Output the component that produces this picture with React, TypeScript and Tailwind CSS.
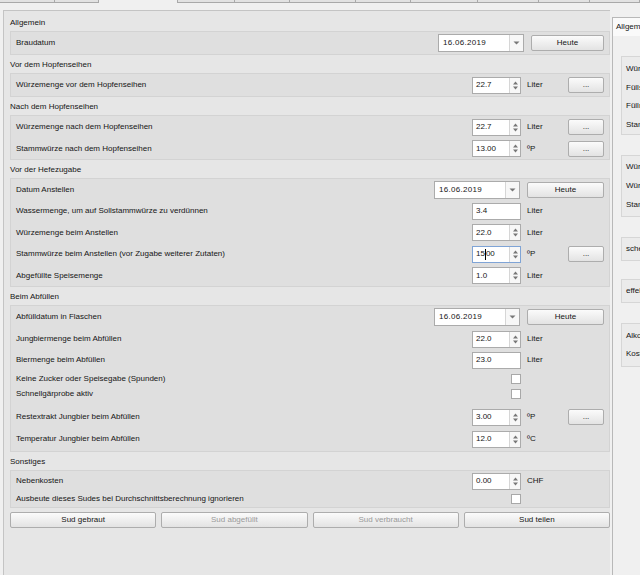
import React from 'react';

// Brau-Formular (Qt-Stil), kleine Schrift wie Tahoma 8pt verkleinert

const font = { fontFamily: '"Liberation Sans", Arial, sans-serif' };

function SpinArrows() {
  return (
    <div className="w-[11px] h-full border-l border-[#d6d6d6] flex items-center justify-center bg-[#f7f7f7]">
      <svg width="7" height="11" viewBox="0 0 7 11">
        <path d="M1 4.5 L3.5 1.5 L6 4.5 Z" fill="#777" />
        <path d="M1 6.5 L3.5 9.5 L6 6.5 Z" fill="#777" />
      </svg>
    </div>
  );
}

function Spin({ value, arrows = true, focused = false }: { value: string; arrows?: boolean; focused?: boolean }) {
  return (
    <div
      className={
        focused
          ? 'w-[49px] h-[17px] bg-white border border-[#7fa4d6] flex items-center'
          : 'w-[49px] h-[17px] bg-white border border-[#ababab] flex items-center'
      }
    >
      <div className="flex-1 pl-[3px] flex items-center text-[#151515]">
        {focused ? (
          <>
            <span>15</span>
            <span className="w-px h-[11px] bg-black" />
            <span>00</span>
          </>
        ) : (
          value
        )}
      </div>
      {arrows && <SpinArrows />}
    </div>
  );
}

function DateEdit({ value }: { value: string }) {
  return (
    <div className="w-[86px] h-[18px] bg-white border border-[#ababab] flex items-center">
      <div className="flex-1 pl-[4px] tracking-[0.3px] text-[#151515]">{value}</div>
      <div className="w-[14px] h-full border-l border-[#d6d6d6] flex items-center justify-center bg-[#f7f7f7]">
        <svg width="7" height="4" viewBox="0 0 7 4">
          <path d="M0.5 0.5 L3.5 3.5 L6.5 0.5 Z" fill="#777" />
        </svg>
      </div>
    </div>
  );
}

function Btn({ label, className = '', disabled = false }: { label: string; className?: string; disabled?: boolean }) {
  return (
    <div
      className={
        'h-[16px] flex items-center justify-center rounded-[2px] border border-[#adadad] bg-gradient-to-b from-[#fbfbfb] to-[#e3e3e3] ' +
        (disabled ? 'text-[#9a9a9a] ' : 'text-[#151515] ') +
        className
      }
    >
      {label}
    </div>
  );
}

function Check() {
  return <div className="w-[10px] h-[10px] bg-white border border-[#a8a8a8]" />;
}

interface RowProps {
  label: string;
  h: string;
  value?: string;
  arrows?: boolean;
  focused?: boolean;
  unit?: string;
  dots?: boolean;
  check?: boolean;
}

function Row({ label, h, value, arrows = true, focused, unit, dots, check }: RowProps) {
  return (
    <div className={'flex items-center pl-[5px] pr-[5px] ' + h}>
      <div className="flex-1 text-[#151515] whitespace-nowrap">{label}</div>
      <div className="w-[49px] flex justify-end">
        {check ? <Check /> : value !== undefined && <Spin value={value} arrows={arrows} focused={focused} />}
      </div>
      <div className="w-[47px] pl-[6px] text-[#151515]">{unit}</div>
      <div className="w-[36px]">{dots && <Btn label="..." className="w-[36px]" />}</div>
    </div>
  );
}

function DateRow({ label, h, narrow }: { label: string; h: string; narrow?: boolean }) {
  return (
    <div className={'flex items-center pl-[5px] pr-[5px] ' + h}>
      <div className="flex-1 text-[#151515]">{label}</div>
      <DateEdit value="16.06.2019" />
      {narrow ? <Btn label="Heute" className="ml-[7px] w-[73px]" /> : <Btn label="Heute" className="ml-[7px] w-[77px]" />}
    </div>
  );
}

function GroupLabel({ title }: { title: string }) {
  return <div className="h-[18px] pt-[2px] flex items-center text-[#151515]">{title}</div>;
}

function Box({ children, className = '' }: { children: React.ReactNode; className?: string }) {
  return <div className={'w-[600px] border border-[#d3d3d3] bg-[#dfdfdf] ' + className}>{children}</div>;
}

function RightBox({ rows, className, rowH }: { rows: string[]; className: string; rowH: string }) {
  return (
    <div className={'border border-r-0 border-[#d6d6d6] bg-[#ebebeb] ' + className}>
      {rows.map((r, i) => (
        <div key={i} className={'pl-[4px] flex items-center whitespace-nowrap text-[#151515] ' + rowH}>
          {r}
        </div>
      ))}
    </div>
  );
}

const tabs = [
  { w: 'w-[55px]', sel: false },
  { w: 'w-[44px]', sel: false },
  { w: 'w-[79px]', sel: true },
  { w: 'w-[57px]', sel: false },
  { w: 'w-[55px]', sel: false },
  { w: 'w-[66px]', sel: false },
  { w: 'w-[55px]', sel: false },
  { w: 'w-[67px]', sel: false },
  { w: 'w-[61px]', sel: false },
  { w: 'w-[51px]', sel: false },
  { w: 'w-[50px]', sel: false },
];

export default function App() {
  return (
    <div className="w-[640px] h-[575px] overflow-hidden bg-[#f0f0f0] flex flex-col text-[8px] leading-none" style={font}>
      {/* Reiterleiste oben */}
      <div className="h-[3px] flex shrink-0">
        {tabs.map((t, i) =>
          t.sel ? (
            <div key={i} className={t.w + ' h-full bg-[#f0f0f0] border-r border-[#a9a9a9]'} />
          ) : (
            <div key={i} className={t.w + ' h-full bg-[#e2e2e2] border-r border-b border-[#a9a9a9]'} />
          )
        )}
      </div>

      <div className="flex-1 flex">
        {/* Hauptbereich */}
        <div className="w-[612px] pl-[3px] pt-[7px] flex">
          <div className="flex-1 border-l border-t border-[#c4c4c4] bg-[#e6e6e6] pl-[6px] pt-[2px]">
            <GroupLabel title="Allgemein" />
            <Box>
              <DateRow label="Braudatum" h="h-[22px]" narrow />
            </Box>

            <GroupLabel title="Vor dem Hopfenseihen" />
            <Box>
              <Row label="Würzemenge vor dem Hopfenseihen" h="h-[22px]" value="22.7" unit="Liter" dots />
            </Box>

            <GroupLabel title="Nach dem Hopfenseihen" />
            <Box>
              <Row label="Würzemenge nach dem Hopfenseihen" h="h-[22px]" value="22.7" unit="Liter" dots />
              <Row label="Stammwürze nach dem Hopfenseihen" h="h-[21px]" value="13.00" unit="ºP" dots />
            </Box>

            <GroupLabel title="Vor der Hefezugabe" />
            <Box>
              <DateRow label="Datum Anstellen" h="h-[21px]" />
              <Row label="Wassermenge, um auf Sollstammwürze zu verdünnen" h="h-[22px]" value="3.4" arrows={false} unit="Liter" />
              <Row label="Würzemenge beim Anstellen" h="h-[21px]" value="22.0" unit="Liter" />
              <Row label="Stammwürze beim Anstellen (vor Zugabe weiterer Zutaten)" h="h-[22px]" value="15.00" focused unit="ºP" dots />
              <Row label="Abgefüllte Speisemenge" h="h-[21px]" value="1.0" unit="Liter" />
            </Box>

            <GroupLabel title="Beim Abfüllen" />
            <Box className="pb-[1px]">
              <DateRow label="Abfülldatum in Flaschen" h="h-[22px]" />
              <Row label="Jungbiermenge beim Abfüllen" h="h-[22px]" value="22.0" unit="Liter" />
              <Row label="Biermenge beim Abfüllen" h="h-[20px]" value="23.0" arrows={false} unit="Liter" />
              <Row label="Keine Zucker oder Speisegabe (Spunden)" h="h-[18px]" check />
              <Row label="Schnellgärprobe aktiv" h="h-[12px]" check />
              <div className="h-[6px]" />
              <Row label="Restextrakt Jungbier beim Abfüllen" h="h-[22px]" value="3.00" unit="ºP" dots />
              <Row label="Temperatur Jungbier beim Abfüllen" h="h-[22px]" value="12.0" unit="ºC" />
            </Box>

            <GroupLabel title="Sonstiges" />
            <Box>
              <Row label="Nebenkosten" h="h-[20px]" value="0.00" unit="CHF" />
              <Row label="Ausbeute dieses Sudes bei Durchschnittsberechnung ignorieren" h="h-[16px]" check />
            </Box>

            <div className="w-[600px] mt-[4px] flex gap-[5px]">
              <Btn label="Sud gebraut" className="flex-1" />
              <Btn label="Sud abgefüllt" className="flex-1" disabled />
              <Btn label="Sud verbraucht" className="flex-1" disabled />
              <Btn label="Sud teilen" className="flex-1" />
            </div>
          </div>
        </div>

        {/* rechte Seitenleiste, abgeschnitten */}
        <div className="flex-1 pt-[14px] pl-[2px] flex flex-col">
          <div className="h-[19px] border-t border-l border-[#b8b8b8] bg-[#fafafa] pl-[3px] flex items-center whitespace-nowrap text-[#151515]">
            Allgemein
          </div>
          <div className="flex-1 border-l border-[#b8b8b8] bg-[#f0f0f0] pl-[8px]">
            <RightBox className="mt-[20px] pt-[3px]" rowH="h-[18.5px]" rows={['Würzemenge', 'Füllstand', 'Füllmenge', 'Stammwürze']} />
            <RightBox className="mt-[20px] pt-[1.5px] pb-[1.5px]" rowH="h-[19px]" rows={['Würzemenge', 'Würzemenge', 'Stammwürze']} />
            <RightBox className="mt-[20px]" rowH="h-[22px]" rows={['scheinbarer Vergärungsgrad']} />
            <RightBox className="mt-[18px]" rowH="h-[22px]" rows={['effektive Sudhausausbeute']} />
            <RightBox className="mt-[20px] pt-[3px] pb-[3px]" rowH="h-[18px]" rows={['Alkoholgehalt', 'Kosten']} />
          </div>
        </div>
      </div>
    </div>
  );
}
